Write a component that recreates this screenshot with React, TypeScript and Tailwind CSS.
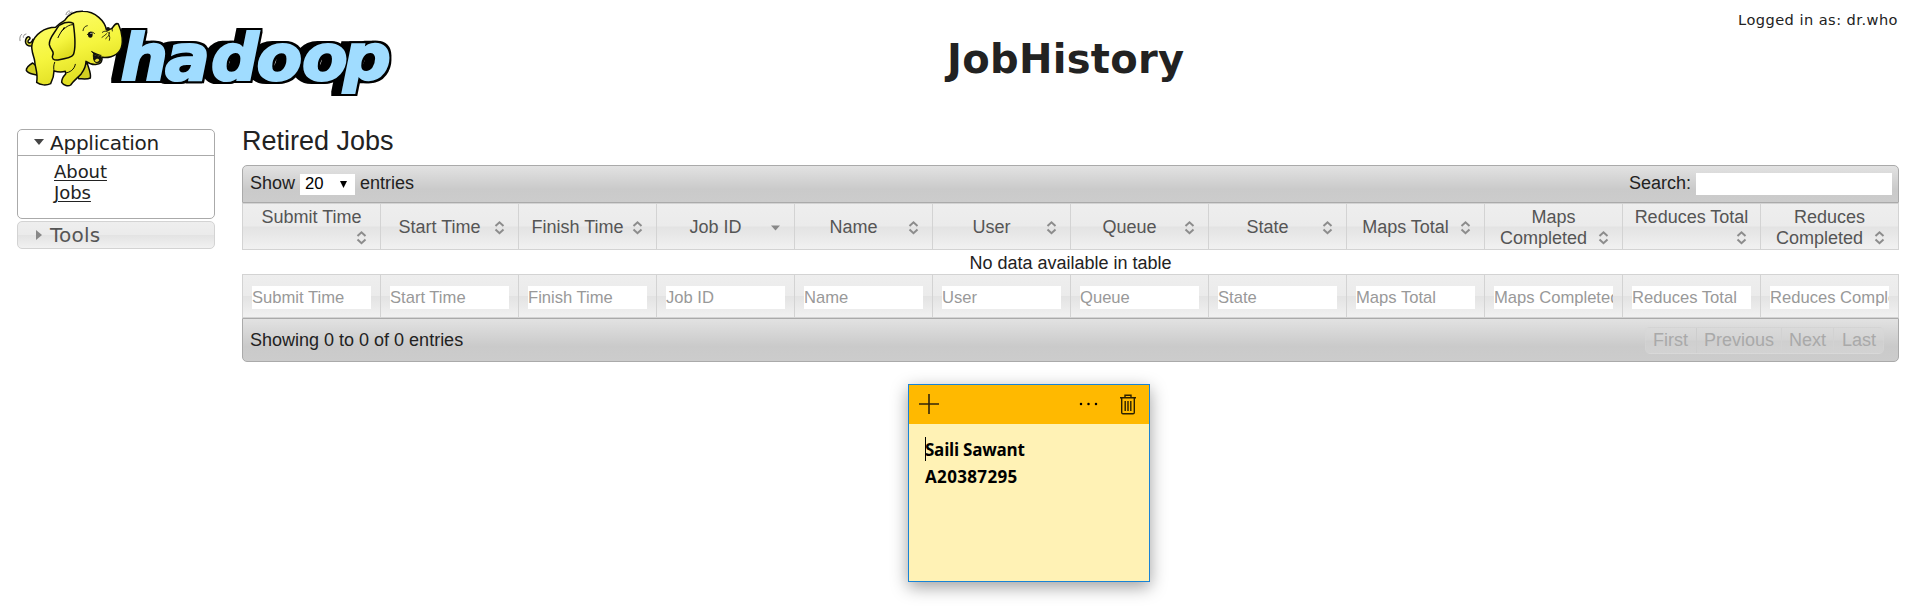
import React from 'react';

type Column = { lines: string[]; placeholder: string; sorted?: boolean };

const columns: Column[] = [
  { lines: ['Submit Time', ''], placeholder: 'Submit Time' },
  { lines: ['Start Time'], placeholder: 'Start Time' },
  { lines: ['Finish Time'], placeholder: 'Finish Time' },
  { lines: ['Job ID'], placeholder: 'Job ID', sorted: true },
  { lines: ['Name'], placeholder: 'Name' },
  { lines: ['User'], placeholder: 'User' },
  { lines: ['Queue'], placeholder: 'Queue' },
  { lines: ['State'], placeholder: 'State' },
  { lines: ['Maps Total'], placeholder: 'Maps Total' },
  { lines: ['Maps', 'Completed'], placeholder: 'Maps Completed' },
  { lines: ['Reduces Total', ''], placeholder: 'Reduces Total' },
  { lines: ['Reduces', 'Completed'], placeholder: 'Reduces Completed' },
];

function Logo() {
  return (
    <svg width="400" height="110" viewBox="0 0 400 110" className="block shrink-0">
      <defs>
        <linearGradient id="hide" x1="0" y1="0" x2="0.4" y2="1">
          <stop offset="0" stopColor="#ffff72" />
          <stop offset="0.6" stopColor="#f5f53e" />
          <stop offset="1" stopColor="#dfdc20" />
        </linearGradient>
        <filter id="extrude" filterUnits="userSpaceOnUse" x="90" y="10" width="310" height="100" colorInterpolationFilters="sRGB">
          <feMorphology in="SourceAlpha" operator="dilate" radius="2" result="outline" />
          <feMorphology in="SourceAlpha" operator="dilate" radius="5 2" result="wide" />
          <feOffset in="wide" dx="-5" dy="0" result="side" />
          <feMerge>
            <feMergeNode in="side" />
            <feMergeNode in="outline" />
            <feMergeNode in="SourceGraphic" />
          </feMerge>
        </filter>
      </defs>
      <g filter="url(#extrude)">
        <text
          x="115.8 158.6 203 246.6 290.4 330"
          y="80.5"
          transform="scale(1.04 1)"
          fill="#a0dcff"
          stroke="#a0dcff"
          strokeWidth="2.2"
          className="font-['DejaVu_Sans'] text-[64px] font-bold italic"
        >
          hadoop
        </text>
      </g>
      <g transform="translate(10 5) scale(0.33333)" stroke="#0c0c06" strokeWidth="4.5" strokeLinejoin="round" strokeLinecap="round">
        <path d="M68 121C56 127 44 118 47 105C49 96 57 92 60 99C61 105 52 103 54 111C58 117 66 112 69 103" fill="url(#hide)" />
        <path d="M68 174C58 180 48 188 49 196C54 207 69 206 82 211L88 190Z" fill="#d2cf22" />
        <path d="M232 175C235 188 244 205 241 219C231 224 216 221 206 221L198 190Z" fill="#d2cf22" />
        <path
          d="M137 67C104 67 72 88 66 118C62 138 73 155 74 168C75 188 85 203 80 232C91 241 109 242 122 236C128 224 132 213 132 198C143 201 155 202 166 199L167 207C159 215 155 224 155 232C161 242 175 245 182 240C191 226 203 219 214 206C223 194 228 184 228 169C237 175 247 181 260 178C268 177 275 171 276 163C276 159 273 156 270 156C291 160 317 156 330 136C342 117 337 82 325 57C318 53 313 60 306 70C301 74 295 74 289 74C285 49 256 19 219 19C190 18 174 31 164 46C155 51 143 60 137 67Z"
          fill="url(#hide)"
        />
        <path d="M190 55C176 47 151 54 141 70C134 84 116 100 118 119C122 137 135 139 128 151C124 159 130 167 144 165C163 162 185 158 190 149C199 127 194 84 190 55Z" fill="url(#hide)" />
        <path d="M190 59C177 58 166 67 153 81M163 67C157 75 148 88 144 98" fill="none" strokeWidth="3" />
        <path d="M134 172C130 182 131 191 132 198M196 178C193 194 180 202 167 204" fill="none" strokeWidth="3" />
        <path d="M245 139C249 149 261 151 273 151M250 149C250 163 252 173 262 173C271 173 275 165 271 156Z" fill="#111" strokeWidth="3" />
        <path d="M254 167C259 160 265 160 268 166C263 173 258 172 254 167Z" fill="#e8da35" stroke="none" />
        <path d="M219 77C220 68 225 63 232 62M232 89C237 79 249 79 254 86M277 82C285 76 292 78 297 85M276 97C282 93 288 88 290 86M287 101C294 95 299 91 298 82M298 106C300 100 300 94 297 90M306 70L307 78" fill="none" strokeWidth="2.5" />
        <ellipse cx="241" cy="89" rx="7" ry="9" fill="#111" stroke="none" />
        <circle cx="243" cy="85" r="2" fill="#fff" stroke="none" />
        <circle cx="294" cy="72" r="6" fill="#111" stroke="none" />
        <path d="M30 107C28 98 31 91 35 88M40 97C39 92 43 88 48 87M168 29C169 22 174 17 179 18M174 28C176 25 180 22 186 21" fill="none" stroke="#777" strokeWidth="2.5" />
      </g>
    </svg>
  );
}

function SortIcon({ sorted }: { sorted?: boolean }) {
  return (
    <svg width="20" height="20" viewBox="0 0 20 20" className="shrink-0">
      {sorted ? (
        <path d="M5 7.5H14L9.5 12.5Z" fill="#888" />
      ) : (
        <path d="M5.5 8L9.5 4.3L13.5 8M5.5 11.5L9.5 15.2L13.5 11.5" fill="none" stroke="#8c8c8c" strokeWidth="2" />
      )}
    </svg>
  );
}

function HeaderCell({ column }: { column: Column }) {
  const last = column.lines.length - 1;
  return (
    <div className="flex h-[45px] flex-col justify-center border-r border-[#d3d3d3] bg-[linear-gradient(#eeeeee_0%,#ebebeb_49%,#e3e3e3_51%,#f1f1f1_100%)] px-2 pt-[2px] text-center text-[#555]">
      {column.lines.map((line, i) =>
        i === last ? (
          <div key={i} className="flex h-[21px] items-center leading-[21px]">
            <span className="flex-1">{line}</span>
            <SortIcon sorted={column.sorted} />
          </div>
        ) : (
          <div key={i} className="h-[21px] leading-[21px] whitespace-nowrap">{line}</div>
        ),
      )}
    </div>
  );
}

function Sidebar() {
  return (
    <nav className="w-[198px] shrink-0 pt-[14px] font-['DejaVu_Sans',sans-serif] text-[#222]">
      <div className="h-[90px] rounded-[5px] border border-[#aaa] bg-white">
        <div className="flex h-[26px] items-center border-b border-[#aaa] pl-4">
          <svg width="10" height="6" viewBox="0 0 10 6" className="mb-[2px]">
            <path d="M0 0H10L5 6Z" fill="#454545" />
          </svg>
          <span className="ml-[6px] text-[20px] leading-6 tracking-[-0.25px]">Application</span>
        </div>
        <ul className="pt-[5px] pl-9 text-[18px] leading-[21px] tracking-[-0.05px]">
          <li><a href="#about" className="underline underline-offset-2">About</a></li>
          <li><a href="#jobs" className="underline underline-offset-2">Jobs</a></li>
        </ul>
      </div>
      <div className="mt-[2px] flex h-7 items-center rounded-[5px] border border-[#d3d3d3] bg-[linear-gradient(#eeeeee_0%,#ebebeb_49%,#e3e3e3_51%,#f1f1f1_100%)] pl-[18px] text-[#555]">
        <svg width="6" height="10" viewBox="0 0 6 10">
          <path d="M0 0V10L6 5Z" fill="#888" />
        </svg>
        <span className="ml-2 text-[20px] leading-6 tracking-[0.2px]">Tools</span>
      </div>
    </nav>
  );
}

function JobsTable() {
  return (
    <main className="ml-[27px] w-[1657px] font-['Liberation_Sans',Arial,sans-serif] text-[18px] text-[#222]">
      <h2 className="h-[50px] pt-[11px] text-[27px] leading-[31px]">Retired Jobs</h2>
      <div className="flex h-[38px] items-center rounded-t-[5px] border border-[#aaa] bg-[linear-gradient(#e2e2e2_0%,#cacaca_65%,#cccccc_100%)] pr-[6px] pl-[7px]">
        <span className="-mt-[2px]">Show</span>
        <div className="mr-[5px] ml-[5px] flex h-[21px] w-[55px] items-center justify-between bg-white pr-[8px] pl-[5px] text-[16.7px] text-black">
          20
          <svg width="7" height="7" viewBox="0 0 7 7"><path d="M0 0H7L3.5 7Z" /></svg>
        </div>
        <span className="-mt-[2px]">entries</span>
        <label className="ml-auto flex items-center">
          <span className="-mt-[2px]">Search:</span>
          <input className="ml-[5px] h-[22px] w-[196px] bg-white" />
        </label>
      </div>
      <div className="grid grid-cols-12 border-y border-l border-[#d3d3d3]">
        {columns.map((c) => <HeaderCell key={c.placeholder} column={c} />)}
      </div>
      <div className="h-6 pt-px text-center leading-6">No data available in table</div>
      <div className="grid grid-cols-12 border-y border-l border-[#d3d3d3]">
        {columns.map((c) => (
          <div key={c.placeholder} className="h-[42px] border-r border-[#d3d3d3] bg-[linear-gradient(#eeeeee_0%,#ebebeb_49%,#e3e3e3_51%,#f1f1f1_100%)] pt-[11px] pl-[9px]">
            <input
              placeholder={c.placeholder}
              className="block h-[23px] w-[119px] bg-white pt-px text-[16.6px] placeholder:text-[#999]"
            />
          </div>
        ))}
      </div>
      <div className="flex h-11 items-center rounded-b-[5px] border border-[#aaa] bg-[linear-gradient(#e2e2e2_0%,#cacaca_65%,#cccccc_100%)] pr-[14px] pl-[7px]">
        <span>Showing 0 to 0 of 0 entries</span>
        <div className="ml-auto flex h-[27px] items-center overflow-hidden rounded-[5px] border border-[#d6d6d6]/40 bg-[linear-gradient(#dadada_0%,#d3d3d3_49%,#cfcfcf_51%,#d2d2d2_100%)] leading-[25px] text-[#a9a9a9]">
          <span className="w-[51px] border-r border-[#cdcdcd] pl-[7px]">First</span>
          <span className="w-[85px] border-r border-[#d2d2d2] pl-[7px]">Previous</span>
          <span className="w-[52px] border-r border-[#d2d2d2] pl-[7px]">Next</span>
          <span className="w-[49px] pl-[8px]">Last</span>
        </div>
      </div>
    </main>
  );
}

function StickyNote() {
  return (
    <aside className="absolute top-[384px] left-[908px] flex h-[198px] w-[242px] flex-col border border-[#1883d7] bg-[#fff2b5] shadow-[0_5px_16px_rgba(0,0,0,0.38)]">
      <div className="flex h-[39px] items-center bg-[#ffb900] pr-3 pb-px pl-[10px]">
        <svg width="20" height="20" viewBox="0 0 20 20"><path d="M10 0V20M0 10H20" stroke="#33260a" strokeWidth="1.6" /></svg>
        <svg width="19" height="4" viewBox="0 0 19 4" className="ml-auto">
          <circle cx="2" cy="2" r="1.25" /><circle cx="9.5" cy="2" r="1.25" /><circle cx="17" cy="2" r="1.25" />
        </svg>
        <svg width="18" height="21" viewBox="0 0 18 21" className="ml-[21px]" fill="none" stroke="#2b2000" strokeWidth="1.4">
          <path d="M1 3.7H17M6 3.5V1.2H12V3.5M2.7 3.7V18.5Q2.7 19.7 4 19.7H14Q15.3 19.7 15.3 18.5V3.7M6.2 7V17M9 7V17M11.8 7V17" />
        </svg>
      </div>
      <div className="flex pt-[12px] pl-4 font-['Open_Sans','Noto_Sans',sans-serif] text-[17px] leading-[27px] font-bold text-black">
        <i className="-mr-px mt-[1px] h-6 w-px bg-black" />
        <div>
          <p className="tracking-[-0.25px]">Saili Sawant</p>
          <p className="tracking-[0.35px]">A20387295</p>
        </div>
      </div>
    </aside>
  );
}

export default function App() {
  return (
    <div className="relative h-[612px] w-[1912px] overflow-hidden bg-white">
      <header className="flex h-[115px] font-['DejaVu_Sans',sans-serif] text-[#222]">
        <Logo />
        <h1 className="ml-[547px] pt-[36px] text-[40px] leading-[47px] font-bold tracking-[0.3px]">JobHistory</h1>
        <p className="ml-auto pt-[10px] pr-[14px] text-[14.6px] leading-5 tracking-[0.45px]">Logged in as: dr.who</p>
      </header>
      <div className="flex pl-[17px]">
        <Sidebar />
        <JobsTable />
      </div>
      <StickyNote />
    </div>
  );
}
